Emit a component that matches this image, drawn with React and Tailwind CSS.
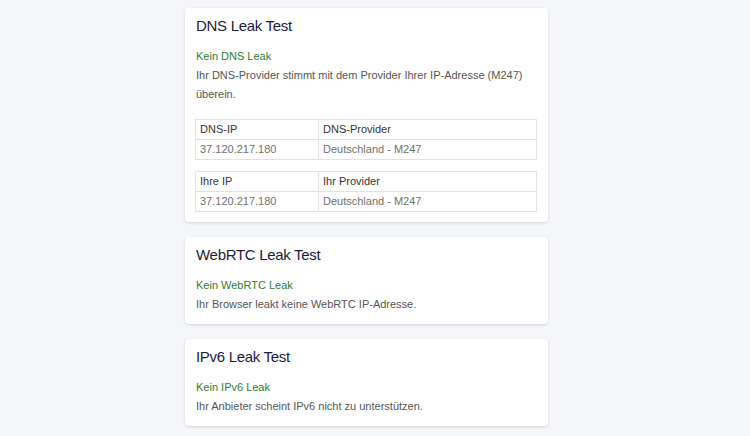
import React from 'react';

const font = { fontFamily: '"Liberation Sans", Arial, sans-serif' };

const InfoTable = ({ head, row }) => (
  <table className="w-full border-collapse text-[11px] leading-[19px]">
    <tbody>
      <tr className="text-[#333]">
        <td className="w-[123px] border border-[#e2e2e2] px-[4px]">{head[0]}</td>
        <td className="border border-[#e2e2e2] px-[4px]">{head[1]}</td>
      </tr>
      <tr className="text-[#707070]">
        <td className="border border-[#e2e2e2] px-[4px]">{row[0]}</td>
        <td className="border border-[#e2e2e2] px-[4px]">{row[1]}</td>
      </tr>
    </tbody>
  </table>
);

const Card = ({ title, status, children }) => (
  <section className="rounded-[4px] bg-white px-[11px] pt-[6px] pb-[10px] shadow-[0_1px_3px_rgba(0,0,0,0.14)]">
    <h2 className="text-[15px] leading-[24px] tracking-[-0.3px] text-[#1b1b3a]">{title}</h2>
    <div className="mt-[9px] text-[11px] leading-[19px]">
      <p className="text-[#2e7d32]">{status}</p>
      {children}
    </div>
  </section>
);

export default function App() {
  return (
    <div className="min-h-[436px] bg-[#f5f6f9] pt-[8px]" style={font}>
      <div className="ml-[185px] flex w-[363px] flex-col gap-[15px]">
        <Card title="DNS Leak Test" status="Kein DNS Leak">
          <p className="text-[#555]">
            Ihr DNS-Provider stimmt mit dem Provider Ihrer IP-Adresse (M247) überein.
          </p>
          <div className="mt-[15px] ml-[-1px] flex flex-col gap-[11px]">
            <InfoTable head={['DNS-IP', 'DNS-Provider']} row={['37.120.217.180', 'Deutschland - M247']} />
            <InfoTable head={['Ihre IP', 'Ihr Provider']} row={['37.120.217.180', 'Deutschland - M247']} />
          </div>
        </Card>
        <Card title="WebRTC Leak Test" status="Kein WebRTC Leak">
          <p className="text-[#555]">Ihr Browser leakt keine WebRTC IP-Adresse.</p>
        </Card>
        <Card title="IPv6 Leak Test" status="Kein IPv6 Leak">
          <p className="text-[#555]">Ihr Anbieter scheint IPv6 nicht zu unterstützen.</p>
        </Card>
      </div>
    </div>
  );
}
